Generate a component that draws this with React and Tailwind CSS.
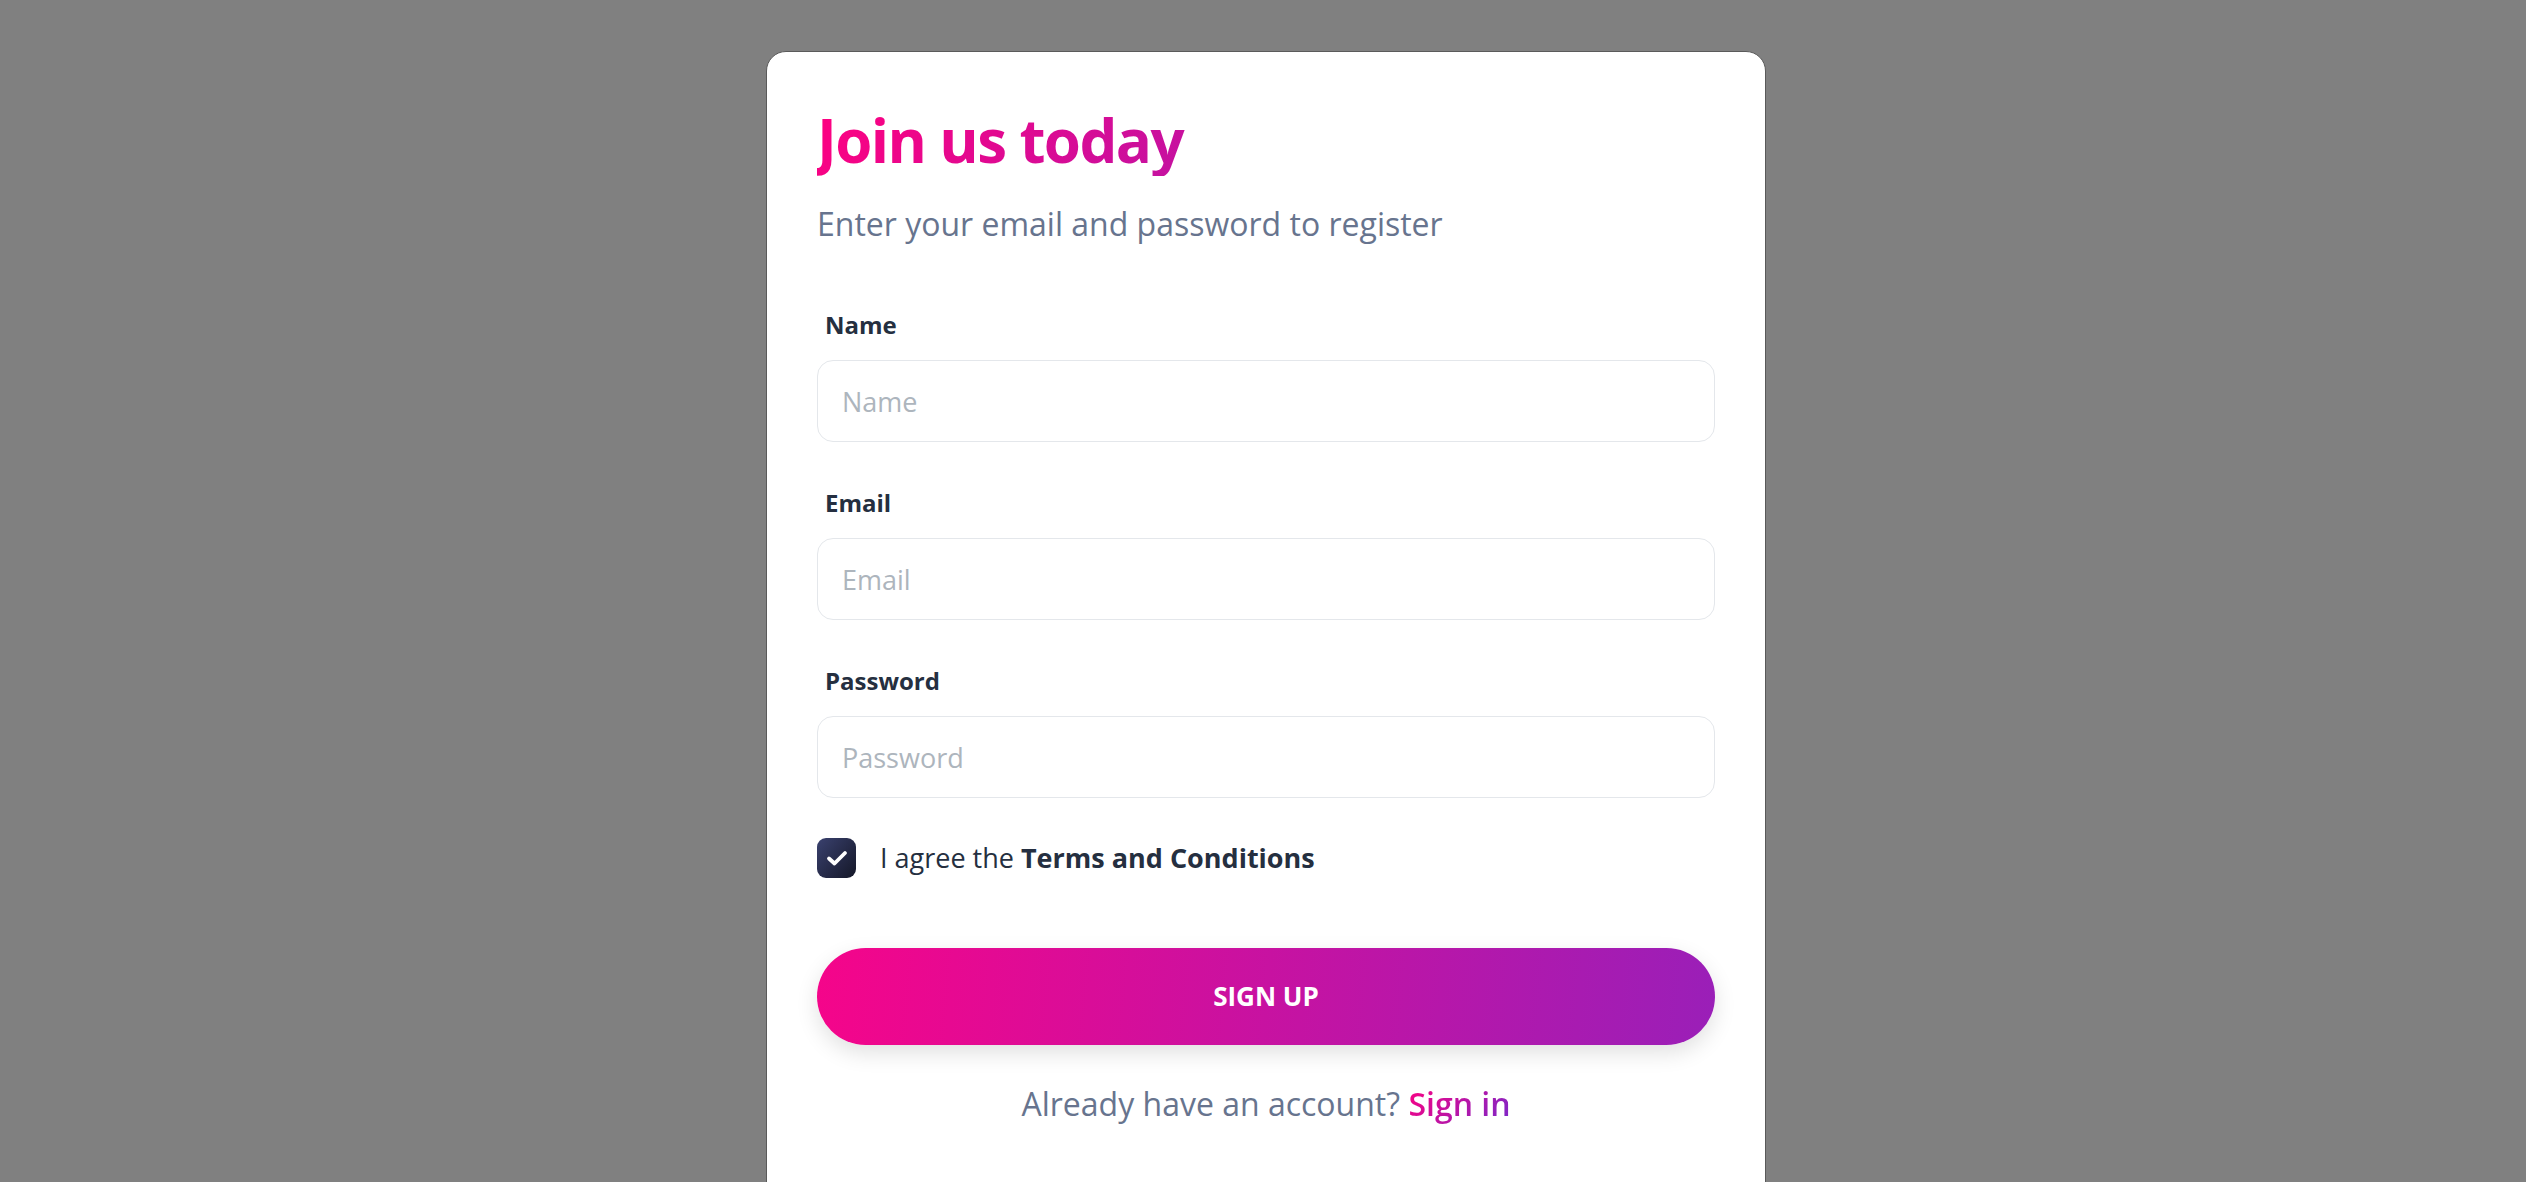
import React from "react";

const Field = ({ label, placeholder, type = "text" }) => {
  return (
    <div className="flex flex-col">
      <label className="pl-[8px] text-[24px] font-bold leading-[34px] text-[#252f40]">
        {label}
      </label>
      <input
        type={type}
        placeholder={placeholder}
        className="mt-[18px] h-[82px] w-full rounded-[16px] border border-[#e4e7eb] bg-white px-[24px] text-[27px] text-[#495057] outline-none placeholder:text-[#adb5bd]"
      />
    </div>
  );
};

const App = () => {
  return (
    <div
      className="min-h-screen bg-[#808080] pl-[6px] pt-[51px]"
      style={{ fontFamily: '"Open Sans", "Noto Sans", sans-serif' }}
    >
      <div className="mx-auto w-[1000px] min-h-[1200px] rounded-t-[20px] border border-[#5a5a5a] bg-white px-[50px] pt-[52px]">
        <h3 className="bg-[linear-gradient(310deg,#7928ca,#ff0080)] bg-clip-text text-[60px] font-bold leading-[72px] tracking-[-1.6px] text-transparent">
          Join us today
        </h3>
        <p className="mt-[24px] text-[32px] leading-[48px] text-[#67748e]">
          Enter your email and password to register
        </p>

        <div className="mt-[60px] flex flex-col gap-[44px]">
          <Field label="Name" placeholder="Name" />
          <Field label="Email" placeholder="Email" type="email" />
          <Field label="Password" placeholder="Password" type="password" />
        </div>

        <div className="mt-[40px] flex items-center">
          <div className="flex h-[40px] w-[39px] items-center justify-center rounded-[9px] bg-[linear-gradient(310deg,#141727,#3a416f)]">
            <svg width="22" height="18" viewBox="0 0 22 18" fill="none">
              <path
                d="M3 9.5 L8.5 14.5 L19 4"
                stroke="white"
                strokeWidth="3.8"
                strokeLinecap="round"
                strokeLinejoin="round"
              />
            </svg>
          </div>
          <span className="ml-[24px] text-[27px] text-[#252f40]">
            I agree the <span className="font-bold">Terms and Conditions</span>
          </span>
        </div>

        <button className="mt-[69px] h-[97px] w-full rounded-full bg-[linear-gradient(95deg,#f5058a,#9a1fb8)] text-[26px] font-bold uppercase text-white shadow-[0_8px_22px_rgba(0,0,0,0.12)]">
          Sign up
        </button>

        <p className="mt-[35px] text-center text-[32px] leading-[48px] text-[#67748e]">
          Already have an account?{" "}
          <a
            href="#"
            className="bg-[linear-gradient(310deg,#7928ca,#ff0080)] bg-clip-text font-semibold text-transparent"
          >
            Sign in
          </a>
        </p>
      </div>
    </div>
  );
};

export default App;
